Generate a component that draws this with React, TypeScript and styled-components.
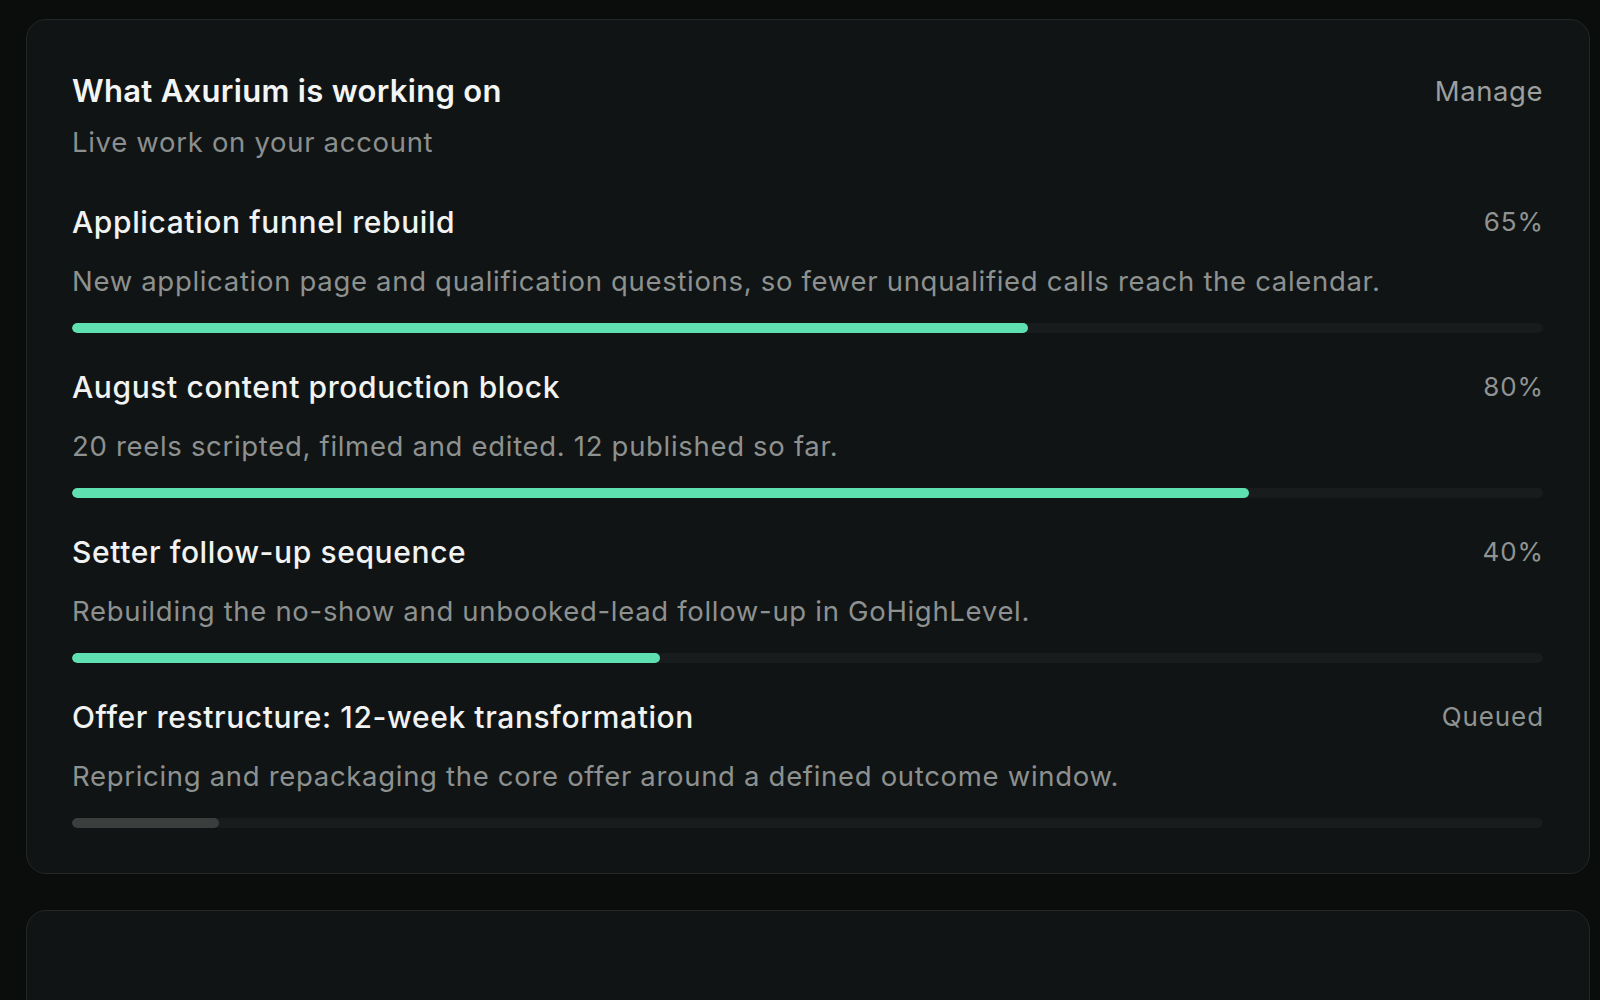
import styled, { createGlobalStyle } from 'styled-components';

const GlobalStyle = createGlobalStyle`
  html, body {
    margin: 0;
    padding: 0;
    background: #0b0c0c;
    font-family: Inter, "Noto Sans", "Liberation Sans", sans-serif;
    -webkit-font-smoothing: antialiased;
  }
`;

const Page = styled.div`
  display: flex;
  flex-direction: column;
  gap: 36px;
  padding: 19px 10px 0 26px;
  height: 1000px;
  box-sizing: border-box;
  overflow: hidden;
`;

const Card = styled.section`
  background: #111414;
  border: 1px solid #232726;
  border-radius: 20px;
  padding: 53px 46px 45px 45px;
  flex-shrink: 0;
`;

const EmptyCard = styled(Card)`
  height: 200px;
  padding: 0;
`;

const Header = styled.div`
  display: flex;
  justify-content: space-between;
  align-items: flex-start;
  margin-bottom: 44px;
`;

const TitleBlock = styled.div`
  display: flex;
  flex-direction: column;
  gap: 15px;
`;

const Title = styled.h2`
  margin: 0;
  font-size: 31px;
  line-height: 36px;
  font-weight: 600;
  letter-spacing: 0.01em;
  color: #f3f4f4;
`;

const Subtitle = styled.p`
  margin: 0;
  font-size: 27.5px;
  line-height: 36px;
  letter-spacing: 0.025em;
  color: #8b8f8e;
`;

const ManageLink = styled.a`
  font-size: 27.5px;
  line-height: 36px;
  letter-spacing: 0.02em;
  color: #9c9f9e;
  cursor: pointer;
`;

const List = styled.div`
  display: flex;
  flex-direction: column;
  gap: 36px;
`;

const Item = styled.div`
  display: flex;
  flex-direction: column;
`;

const ItemHead = styled.div`
  display: flex;
  justify-content: space-between;
  align-items: center;
  margin-bottom: 23px;
`;

const ItemTitle = styled.h3`
  margin: 0;
  font-size: 30px;
  line-height: 36px;
  font-weight: 500;
  letter-spacing: 0.02em;
  color: #f1f2f2;
`;

const Status = styled.span`
  font-size: 26px;
  line-height: 36px;
  color: #8f9392;
  letter-spacing: 0.035em;
  margin-right: -1px;
`;

const Description = styled.p`
  margin: 0 0 24px;
  font-size: 27.5px;
  line-height: 36px;
  letter-spacing: 0.025em;
  color: #8d9190;
`;

const Track = styled.div`
  height: 10px;
  border-radius: 5px;
  background: #191c1c;
  overflow: hidden;
`;

const Fill = styled.div<{ $queued?: boolean }>`
  height: 100%;
  border-radius: 5px;
  background: ${(p) => (p.$queued ? '#3a3e3d' : '#5ee0b1')};
`;

type Work = {
  title: string;
  description: string;
  progress: number;
  queued?: boolean;
};

const work: Work[] = [
  {
    title: 'Application funnel rebuild',
    description:
      'New application page and qualification questions, so fewer unqualified calls reach the calendar.',
    progress: 65,
  },
  {
    title: 'August content production block',
    description: '20 reels scripted, filmed and edited. 12 published so far.',
    progress: 80,
  },
  {
    title: 'Setter follow-up sequence',
    description: 'Rebuilding the no-show and unbooked-lead follow-up in GoHighLevel.',
    progress: 40,
  },
  {
    title: 'Offer restructure: 12-week transformation',
    description: 'Repricing and repackaging the core offer around a defined outcome window.',
    progress: 10,
    queued: true,
  },
];

export default function App() {
  return (
    <>
      <GlobalStyle />
      <Page>
        <Card>
          <Header>
            <TitleBlock>
              <Title>What Axurium is working on</Title>
              <Subtitle>Live work on your account</Subtitle>
            </TitleBlock>
            <ManageLink>Manage</ManageLink>
          </Header>
          <List>
            {work.map((w) => (
              <Item key={w.title}>
                <ItemHead>
                  <ItemTitle>{w.title}</ItemTitle>
                  <Status>{w.queued ? 'Queued' : `${w.progress}%`}</Status>
                </ItemHead>
                <Description>{w.description}</Description>
                <Track>
                  <Fill $queued={w.queued} style={{ width: `${w.progress}%` }} />
                </Track>
              </Item>
            ))}
          </List>
        </Card>
        <EmptyCard />
      </Page>
    </>
  );
}
